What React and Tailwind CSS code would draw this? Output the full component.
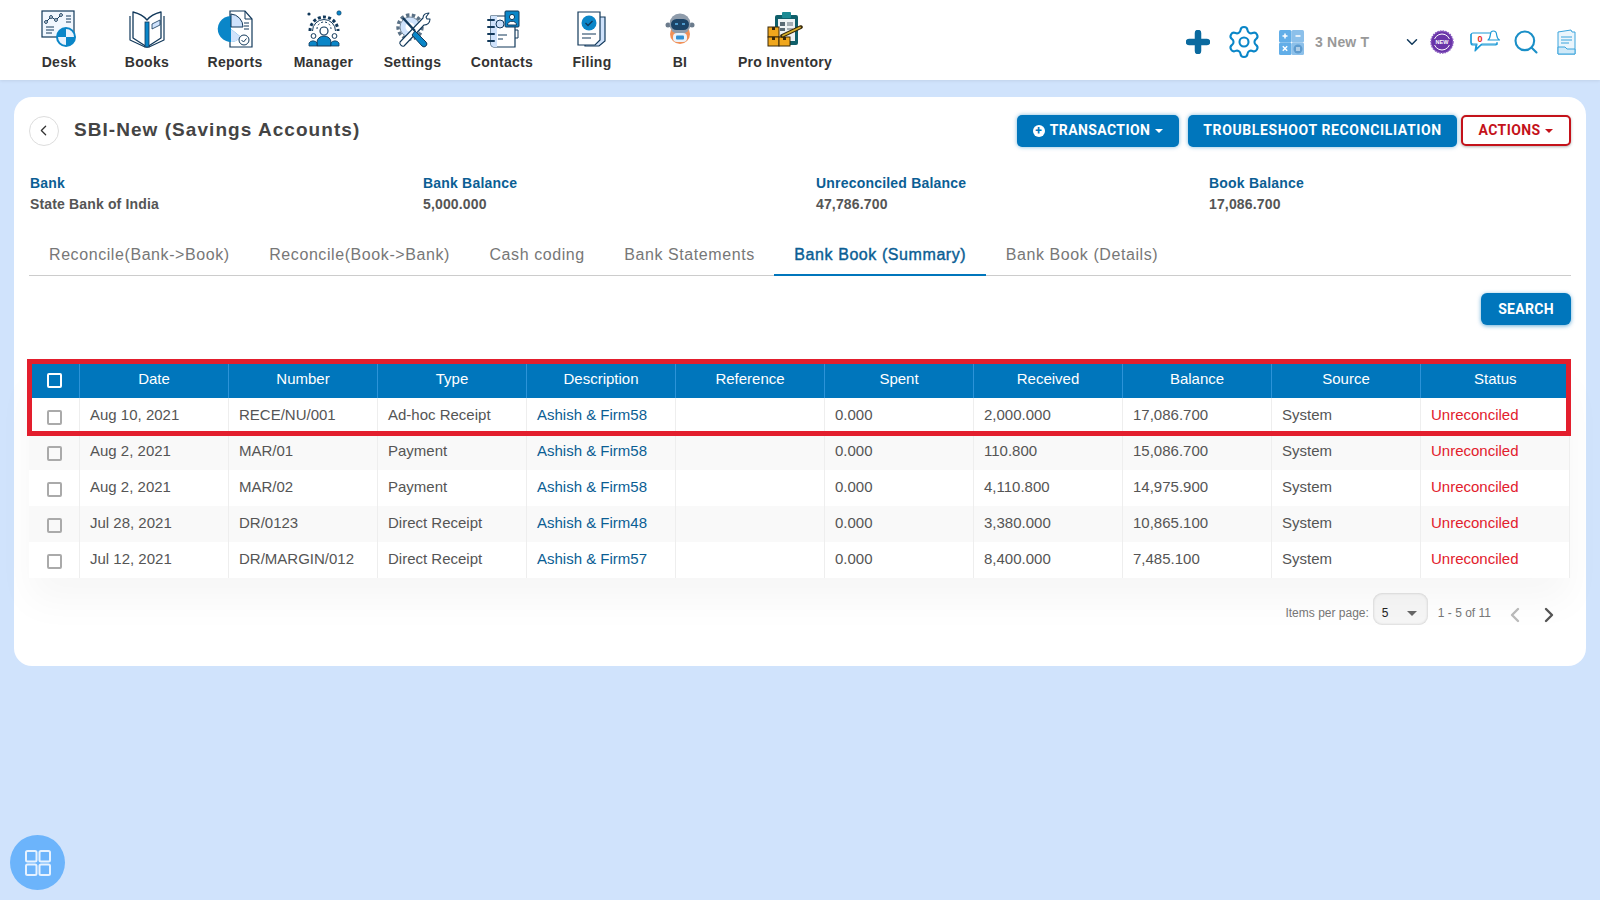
import React from 'react';
import { ChevronLeft, ChevronRight, ChevronDown, Settings, Search } from 'lucide-react';

const NAVY = '#12395b';
const BLUE = '#0a86c8';
const PALE = '#cfe2fb';

function DeskIcon() {
    return (
        <svg width="36" height="38" viewBox="0 0 36 38" fill="none">
            <rect x="1" y="1" width="32" height="26" fill="#f1f7fe" stroke={NAVY} strokeWidth="1.2" />
            <polyline points="5,12 10,7 15,10 20,5" stroke={NAVY} strokeWidth="1" />
            <circle cx="5" cy="12" r="1.4" fill="#fff" stroke={NAVY} />
            <circle cx="10" cy="7" r="1.4" fill="#fff" stroke={NAVY} />
            <circle cx="15" cy="10" r="1.4" fill="#fff" stroke={NAVY} />
            <circle cx="20" cy="5" r="1.4" fill="#fff" stroke={NAVY} />
            <path d="M25 6h5M25 9h5M25 12h5M5 17h8M5 20h8M5 23h6" stroke={NAVY} strokeWidth="1" />
            <circle cx="25" cy="27" r="10" fill={BLUE} />
            <path d="M25 19a8 8 0 0 1 8 8h-8zM25 27h-8a8 8 0 0 0 8 8z" fill="#e8f2fd" />
        </svg>
    );
}

function BooksIcon() {
    return (
        <svg width="36" height="38" viewBox="0 0 36 38" fill="none">
            <path d="M18 10C14 5 8 3 4 2v26l14 9 14-9V2c-4 1-10 3-14 8z" fill="#fff" stroke={NAVY} strokeWidth="1.3" strokeLinejoin="round" />
            <path d="M1 6v24l15 7h4l15-7V6" fill="none" stroke={NAVY} strokeWidth="1.2" strokeLinejoin="round" />
            <rect x="16" y="12" width="4" height="25" fill={BLUE} stroke={NAVY} strokeWidth="0.8" />
            <path d="M23 14l8-4v5l-8 4z" fill={PALE} stroke={NAVY} strokeWidth="0.8" />
        </svg>
    );
}

function ReportsIcon() {
    return (
        <svg width="36" height="38" viewBox="0 0 36 38" fill="none">
            <path d="M13 1h15l7 8v28H13z" fill="#fff" stroke={NAVY} strokeWidth="1.2" />
            <path d="M28 1v8h7" stroke={NAVY} strokeWidth="1" />
            <path d="M27 13h5M27 16h5M27 19h5" stroke={NAVY} strokeWidth="1" />
            <path d="M14 6a13 13 0 1 0 10 21l-10-8z" fill={BLUE} />
            <path d="M14 19l10 8a13 13 0 0 1-10 5z" fill={PALE} />
            <path d="M14 4a13 13 0 0 1 12 13H14z" fill={PALE} stroke={NAVY} strokeWidth="1" />
            <circle cx="27" cy="30" r="5" fill="#fff" stroke={NAVY} strokeWidth="1" />
            <path d="M24.5 30l2 2 3-3.5" stroke={NAVY} strokeWidth="1" />
        </svg>
    );
}

function ManagerIcon() {
    return (
        <svg width="36" height="38" viewBox="0 0 36 38" fill="none">
            <path d="M4 21a14 14 0 1 1 28 0" stroke={NAVY} strokeWidth="3" strokeDasharray="3 2.2" />
            <path d="M6.500 21a11.500 11.500 0 0 1 23 0" fill="#fff" stroke={NAVY} strokeWidth="1" />
            <path d="M11 19a7 7 0 0 1 14 0" stroke={NAVY} strokeWidth="1" strokeDasharray="2 2" />
            <circle cx="3" cy="4" r="1.6" fill={NAVY} />
            <circle cx="33" cy="3" r="2.2" fill={BLUE} stroke={NAVY} strokeWidth="0.6" />
            <circle cx="18" cy="21" r="4" fill="#fff" stroke={NAVY} strokeWidth="1.2" />
            <path d="M11 36v-4a7 6 0 0 1 14 0v4z" fill={BLUE} stroke={NAVY} strokeWidth="1" />
            <circle cx="7.5" cy="26" r="2.4" fill="#fff" stroke={NAVY} />
            <circle cx="28.5" cy="26" r="2.4" fill="#fff" stroke={NAVY} />
            <path d="M3 36v-3a4.500 4 0 0 1 8 0v3zM25 36v-3a4.500 4 0 0 1 8 0v3z" fill={BLUE} stroke={NAVY} strokeWidth="0.8" />
        </svg>
    );
}

function SettingsIcon() {
    return (
        <svg width="36" height="38" viewBox="0 0 36 38" fill="none">
            <circle cx="15" cy="17" r="12" fill="#fff" stroke="#5a7186" strokeWidth="3.400" strokeDasharray="3.400 2.400" />
            <circle cx="15" cy="17" r="10" fill={PALE} stroke="#5a7186" strokeWidth="0.8" />
            <circle cx="15" cy="17" r="4.500" fill="#fff" />
            <path d="M5 32L28 8c0-3 2-5 6-5l-3 4 1 2 3 0c0 4-3 6-6 6L9 36c-2 1-5-2-4-4z" fill="#fff" stroke={NAVY} strokeWidth="1.1" strokeLinejoin="round" />
            <path d="M8 8l12 13" stroke={NAVY} strokeWidth="2.4" />
            <path d="M20 21l11 11a2.800 2.800 0 0 1-4 4L17 25z" fill={BLUE} stroke={NAVY} strokeWidth="1" strokeLinejoin="round" />
        </svg>
    );
}

function ContactsIcon() {
    return (
        <svg width="36" height="38" viewBox="0 0 36 38" fill="none">
            <path d="M7 6h24v31H10a3 3 0 0 1-3-3z" fill="#fff" stroke={NAVY} strokeWidth="1.2" />
            <path d="M7 6h6v31h-3a3 3 0 0 1-3-3z" fill={PALE} />
            <circle cx="16" cy="14" r="4" fill={PALE} stroke={NAVY} />
            <rect x="21" y="1" width="14" height="16" rx="1" fill={BLUE} stroke={NAVY} strokeWidth="1" />
            <circle cx="28" cy="7" r="2.600" fill="#fff" stroke={NAVY} />
            <path d="M23.500 15c0-5 9-5 9 0z" fill="#fff" stroke={NAVY} />
            <path d="M4 10h6M4 17h6M4 24h6M4 31h6" stroke={NAVY} strokeWidth="2" strokeLinecap="round" />
            <path d="M14 25h9M14 29h5" stroke={NAVY} strokeWidth="1.1" />
            <path d="M31 20h3v8h-3" stroke={NAVY} strokeWidth="1" />
        </svg>
    );
}

function FilingIcon() {
    return (
        <svg width="30" height="36" viewBox="0 0 30 36" fill="none">
            <path d="M8 6h20v24l-6 5H8z" fill={PALE} stroke={NAVY} strokeWidth="1.2" />
            <path d="M1 1h22v28l-5 5H1z" fill="#fff" stroke={NAVY} strokeWidth="1.2" />
            <circle cx="12" cy="12" r="7.500" fill={BLUE} />
            <path d="M8.500 12l2.500 2.500 4.500-4.500" stroke="#12395b" strokeWidth="1.3" />
            <path d="M5 23h14M5 27h9" stroke={NAVY} strokeWidth="1.1" />
        </svg>
    );
}

function BiIcon() {
    return (
        <svg width="30" height="32" viewBox="0 0 30 32" fill="none">
            <circle cx="15" cy="21" r="10" fill="#ef7d3a" opacity="0.85" />
            <circle cx="3" cy="12" r="2.500" fill="#6b7b8c" />
            <circle cx="27" cy="12" r="2.500" fill="#6b7b8c" />
            <circle cx="15" cy="11" r="10.500" fill="#8f9cab" />
            <rect x="6" y="6" width="18" height="11" rx="5.500" fill="#1b4468" />
            <path d="M10 11h3M17 11h3" stroke="#5fb7ee" strokeWidth="1.4" />
            <rect x="8" y="20" width="14" height="9" rx="4" fill="#e9f2fb" />
            <rect x="11" y="22.500" width="8" height="4" rx="1" fill="#2f8fd3" />
        </svg>
    );
}

function InventoryIcon() {
    return (
        <svg width="36" height="36" viewBox="0 0 36 36" fill="none">
            <rect x="8" y="4" width="23" height="30" rx="2" fill="#0f5f6a" />
            <rect x="11" y="8" width="17" height="22" fill="#eef2f4" />
            <rect x="15" y="1" width="9" height="6" rx="1" fill="#1c8a94" />
            <path d="M13 11h5v4h-5zM13 17h5v3h-5z" fill="#5a6b75" />
            <path d="M20 12h6M20 14h6M20 18h6" stroke="#5a6b75" strokeWidth="1" />
            <rect x="1" y="16" width="11" height="10" fill="#f0a71d" stroke="#3a2a0a" strokeWidth="1" />
            <rect x="1" y="26" width="11" height="9" fill="#f0a71d" stroke="#3a2a0a" strokeWidth="1" />
            <rect x="12" y="26" width="11" height="9" fill="#f0a71d" stroke="#3a2a0a" strokeWidth="1" />
            <path d="M5 16h3v3H5zM5 26h3v3H5zM16 26h3v3h-3z" fill="#3a2a0a" />
            <path d="M15 25L34 16" stroke="#3a2a0a" strokeWidth="3.600" strokeLinecap="round" />
            <path d="M16 24.500L33 16.500" stroke="#d7b02a" strokeWidth="1.800" strokeLinecap="round" />
        </svg>
    );
}

function PlusIcon() {
    return (
        <svg width="24" height="24" viewBox="0 0 24 24" fill="none">
            <path d="M12 3v18M3 12h18" stroke="#0b6a9f" strokeWidth="6.500" strokeLinecap="round" />
        </svg>
    );
}

function CalcIcon() {
    return (
        <svg width="25" height="25" viewBox="0 0 25 25" fill="none">
            <rect x="0" y="0" width="12.500" height="12.500" rx="1.500" fill="#62aee8" />
            <rect x="12.500" y="0" width="12.500" height="12.500" rx="1.500" fill="#8cc0ea" />
            <rect x="0" y="12.500" width="12.500" height="12.500" rx="1.500" fill="#62aee8" />
            <rect x="12.500" y="12.500" width="12.500" height="12.500" rx="1.500" fill="#8cc0ea" />
            <path d="M3.500 6h5M6 3.500v5M16.500 6h5M3.800 16.300l4.400 4.400M8.200 16.300l-4.400 4.400" stroke="#fff" strokeWidth="1.500" />
            <circle cx="19" cy="19" r="4.500" fill="#5f9ccf" />
            <path d="M17 18h4M17 20h4" stroke="#fff" strokeWidth="1" />
        </svg>
    );
}

function NewBadge() {
    return (
        <svg width="24" height="24" viewBox="0 0 24 24">
            <circle cx="12" cy="12" r="11" fill="#6a35a8" stroke="#8a5cc0" strokeWidth="1.500" strokeDasharray="1.600 1" />
            <circle cx="12" cy="12" r="8" fill="none" stroke="#fff" strokeWidth="1" />
            <rect x="3" y="9" width="18" height="6" fill="#6a35a8" />
            <text x="12" y="14" textAnchor="middle" fill="#fff" fontSize="5.500" fontWeight="700" fontFamily="Liberation Sans, sans-serif">NEW</text>
        </svg>
    );
}

function ChatBell() {
    return (
        <svg width="31" height="26" viewBox="0 0 31 26" fill="none">
            <path d="M3 4h17M28 15H12l-6 5 1-5H3a2 2 0 0 1-2-2V6a2 2 0 0 1 2-2" stroke="#1d9ad6" strokeWidth="1.200" strokeLinejoin="round" />
            <path d="M1 5v9a2 2 0 0 0 2 2h3l-1 6 6-6h14a2 2 0 0 0 2-2v-1" stroke="#1d9ad6" strokeWidth="1.200" strokeLinejoin="round" />
            <path d="M18 11c2-1 2-3 2.500-6a3 3 0 0 1 6 0c.5 3 .5 5 3 6z" fill="#fff" stroke="#1d9ad6" strokeWidth="1.200" strokeLinejoin="round" />
            <text x="10" y="13" textAnchor="middle" fill="#e8291c" fontSize="9" fontWeight="700" fontFamily="Liberation Sans, sans-serif">0</text>
        </svg>
    );
}

function NotesIcon() {
    return (
        <svg width="19" height="26" viewBox="0 0 19 26" fill="none">
            <path d="M1 3l13-2 1 2h3v22H1z" fill="#eaf5fc" stroke="#3aa4dc" strokeWidth="1" />
            <path d="M4 8h11M4 11h11M4 14h8" stroke="#3aa4dc" strokeWidth="1" />
            <path d="M1 25v-7h7l2 2h8v5z" fill="#cfe9f8" stroke="#3aa4dc" strokeWidth="1" />
        </svg>
    );
}

const navItems = [
    { label: 'Desk', icon: <DeskIcon />, width: 'w-[88px]' },
    { label: 'Books', icon: <BooksIcon />, width: 'w-[88px]' },
    { label: 'Reports', icon: <ReportsIcon />, width: 'w-[88px]' },
    { label: 'Manager', icon: <ManagerIcon />, width: 'w-[89px]' },
    { label: 'Settings', icon: <SettingsIcon />, width: 'w-[89px]' },
    { label: 'Contacts', icon: <ContactsIcon />, width: 'w-[90px]' },
    { label: 'Filing', icon: <FilingIcon />, width: 'w-[90px]' },
    { label: 'BI', icon: <BiIcon />, width: 'w-[86px]' },
    { label: 'Pro Inventory', icon: <InventoryIcon />, width: 'w-[124px]' },
];

const summary = [
    { label: 'Bank', value: 'State Bank of India' },
    { label: 'Bank Balance', value: '5,000.000' },
    { label: 'Unreconciled Balance', value: '47,786.700' },
    { label: 'Book Balance', value: '17,086.700' },
];

const tabs = [
    'Reconcile(Bank->Book)',
    'Reconcile(Book->Bank)',
    'Cash coding',
    'Bank Statements',
    'Bank Book (Summary)',
    'Bank Book (Details)',
];

const columns = ['Date', 'Number', 'Type', 'Description', 'Reference', 'Spent', 'Received', 'Balance', 'Source', 'Status'];

const rows = [
    ['Aug 10, 2021', 'RECE/NU/001', 'Ad-hoc Receipt', 'Ashish & Firm58', '2,000.000', '17,086.700'],
    ['Aug 2, 2021', 'MAR/01', 'Payment', 'Ashish & Firm58', '110.800', '15,086.700'],
    ['Aug 2, 2021', 'MAR/02', 'Payment', 'Ashish & Firm58', '4,110.800', '14,975.900'],
    ['Jul 28, 2021', 'DR/0123', 'Direct Receipt', 'Ashish & Firm48', '3,380.000', '10,865.100'],
    ['Jul 12, 2021', 'DR/MARGIN/012', 'Direct Receipt', 'Ashish & Firm57', '8,400.000', '7,485.100'],
];

function Caret({ className }) {
    return <span className={`inline-block w-0 h-0 border-x-[4px] border-x-transparent border-t-[4px] ${className}`} />;
}

function App() {
    return (
        <div className="min-h-screen h-[900px] overflow-hidden bg-[#d0e3fc] font-['Liberation_Sans',sans-serif]">
            <header className="h-[80px] bg-white flex items-start pl-[15px] shadow-[0_1px_3px_rgba(0,0,0,0.08)]">
                {navItems.map((item) => (
                    <div key={item.label} className={`${item.width} h-[80px] flex flex-col items-center`}>
                        <div className="h-[38px] mt-[10px] flex items-center justify-center">{item.icon}</div>
                        <span className="mt-[6px] text-[14px] leading-[16px] font-bold tracking-[0.3px] text-[#333]">{item.label}</span>
                    </div>
                ))}
                <div className="ml-auto h-[80px] pt-[4px] flex items-center pr-[24px]">
                    <PlusIcon />
                    <Settings className="ml-[16px] text-[#0a86c8]" size={36} strokeWidth={1.4} />
                    <div className="ml-[17px]"><CalcIcon /></div>
                    <div className="ml-[11px] w-[88px] overflow-hidden text-[14px] font-bold text-[#999] tracking-[0.2px]">3 New T</div>
                    <ChevronDown className="text-[#12395b]" size={18} strokeWidth={2} />
                    <div className="ml-[9px]"><NewBadge /></div>
                    <div className="ml-[16px]"><ChatBell /></div>
                    <Search className="ml-[11px] text-[#1a8fc7]" size={28} strokeWidth={1.8} />
                    <div className="ml-[17px]"><NotesIcon /></div>
                </div>
            </header>

            <main className="mt-[17px] mx-[14px] h-[569px] bg-white rounded-[18px] pl-[15px] pr-[15px] pt-[18px]">
                <div className="h-[31px] flex items-center">
                    <button className="w-[30px] h-[30px] rounded-full border border-[#ddd] flex items-center justify-center text-[#333]">
                        <ChevronLeft className="mr-[1px]" size={17} strokeWidth={1.8} />
                    </button>
                    <h1 className="ml-[15px] text-[19px] font-bold tracking-[1.05px] text-[#444]">SBI-New (Savings Accounts)</h1>
                    <div className="ml-auto flex items-center font-['Roboto',sans-serif] text-[14px] font-bold tracking-[0.4px]">
                        <button className="h-[32px] w-[162px] rounded-[5px] bg-[#0076bc] text-white flex items-center justify-center gap-[5px] shadow-[0_0_4px_rgba(0,118,188,0.5)]">
                            <span className="w-[12px] h-[12px] rounded-full bg-white text-[#0076bc] flex items-center justify-center text-[12px] leading-none">+</span>
                            TRANSACTION
                            <Caret className="border-t-white" />
                        </button>
                        <button className="ml-[9px] h-[32px] w-[269px] rounded-[5px] bg-[#0076bc] text-white tracking-[0.63px] shadow-[0_0_4px_rgba(0,118,188,0.5)]">
                            TROUBLESHOOT RECONCILIATION
                        </button>
                        <button className="ml-[4px] h-[31px] w-[110px] rounded-[5px] border-2 border-[#c4121a] bg-white text-[#c4121a] flex items-center justify-center gap-[5px] shadow-[0_1px_3px_rgba(0,0,0,0.3)]">
                            ACTIONS
                            <Caret className="border-t-[#c4121a]" />
                        </button>
                    </div>
                </div>

                <div className="mt-[27px] pl-[1px] grid grid-cols-[393px_393px_393px_1fr] text-[14px] leading-[20px] font-bold">
                    {summary.map((item) => (
                        <div key={item.label}>
                            <div className="text-[#0b5e94] tracking-[0.2px]">{item.label}</div>
                            <div className="mt-[1px] text-[#555] tracking-[0.15px]">{item.value}</div>
                        </div>
                    ))}
                </div>

                <div className="mt-[18px] h-[44px] flex border-b border-[#ccc] text-[16px] tracking-[0.58px]">
                    {tabs.map((tab) => (
                        <div
                            key={tab}
                            className={
                                tab === 'Bank Book (Summary)'
                                    ? 'pl-[20px] pr-[19.5px] pt-[4px] h-[44px] flex items-center border-b-2 border-[#0076bc] text-[#0b5e94] [-webkit-text-stroke:0.4px_#0b5e94]'
                                    : 'pl-[20px] pr-[19.5px] pt-[2px] h-[44px] flex items-center text-[#777]'
                            }
                        >
                            {tab}
                        </div>
                    ))}
                </div>

                <div className="mt-[17px] flex justify-end">
                    <button className="w-[90px] h-[32px] rounded-[6px] bg-[#0076bc] text-white font-['Roboto',sans-serif] text-[14px] font-bold tracking-[0.3px] shadow-[0_1px_4px_rgba(0,118,188,0.6)]">
                        SEARCH
                    </button>
                </div>

                <div className="relative mt-[39px] w-[1540px]">
                    <table className="w-[1540px] table-fixed border-collapse text-[15px] shadow-[0_24px_36px_rgba(0,0,0,0.035)]">
                        <colgroup>
                            <col className="w-[50px]" />
                            {columns.map((c) => <col key={c} className="w-[149px]" />)}
                        </colgroup>
                        <thead>
                            <tr className="h-[34px] bg-[#0076bc] text-white">
                                <th className="p-0 pb-[2px]">
                                    <span className="block ml-[18px] w-[15px] h-[15px] border-2 border-white rounded-[2px]" />
                                </th>
                                {columns.map((c) => (
                                    <th key={c} className="p-0 pl-[1px] pb-[4px] font-normal border-l border-[#2c93d8]">{c}</th>
                                ))}
                            </tr>
                        </thead>
                        <tbody className="text-[#555]">
                            {rows.map((row, i) => (
                                <tr key={row[1]} className={i % 2 === 1 ? 'h-[36px] bg-[#f9f9f9]' : 'h-[36px] bg-white'}>
                                    <td className="p-0">
                                        <span className="block ml-[18px] mt-[2px] w-[15px] h-[15px] border-2 border-[#aaa] rounded-[2px]" />
                                    </td>
                                    <td className="pl-[10.5px] pb-[2px] border-l border-[#eee]">{row[0]}</td>
                                    <td className="pl-[10.5px] pb-[2px] border-l border-[#eee]">{row[1]}</td>
                                    <td className="pl-[10.5px] pb-[2px] border-l border-[#eee]">{row[2]}</td>
                                    <td className="pl-[10.5px] pb-[2px] border-l border-[#eee] text-[#0b5e94]">{row[3]}</td>
                                    <td className="pl-[10.5px] pb-[2px] border-l border-[#eee]" />
                                    <td className="pl-[10.5px] pb-[2px] border-l border-[#eee]">0.000</td>
                                    <td className="pl-[10.5px] pb-[2px] border-l border-[#eee]">{row[4]}</td>
                                    <td className="pl-[10.5px] pb-[2px] border-l border-[#eee]">{row[5]}</td>
                                    <td className="pl-[10.5px] pb-[2px] border-l border-[#eee]">System</td>
                                    <td className="pl-[10.5px] pb-[2px] border-x border-[#eee] text-[#e2202c]">Unreconciled</td>
                                </tr>
                            ))}
                        </tbody>
                    </table>
                    <div className="absolute left-[-2px] top-[-5px] w-[1544px] h-[77px] border-[5px] border-[#e31e2d] pointer-events-none" />
                </div>

                <div className="mt-[15px] w-[1540px] h-[32px] flex items-center text-[12px] text-[#777]">
                    <span className="ml-auto pt-[8px]">Items per page:</span>
                    <div className="ml-[4px] w-[55px] h-[32px] pt-[8px] rounded-[9px] bg-[#f6f6f6] shadow-[inset_0_0_3px_rgba(0,0,0,0.2)] flex items-center justify-between pl-[9px] pr-[11px] text-[#222]">
                        5
                        <span className="inline-block w-0 h-0 border-x-[5px] border-x-transparent border-t-[5px] border-t-[#666]" />
                    </div>
                    <span className="ml-[10px] pt-[8px]">1 - 5 of 11</span>
                    <ChevronLeft className="ml-[12px] mt-[12px] text-[#bbb]" size={24} strokeWidth={2.4} />
                    <ChevronRight className="ml-[10px] mr-[8px] mt-[12px] text-[#555]" size={24} strokeWidth={2.4} />
                </div>
            </main>

            <button className="fixed left-[10px] top-[835px] w-[55px] h-[55px] rounded-full bg-[#6cb4fb] flex items-center justify-center">
                <svg width="26" height="26" viewBox="0 0 26 26" fill="none" stroke="#e6f2ff" strokeWidth="2">
                    <rect x="1" y="1" width="10.500" height="10.500" rx="1.500" />
                    <rect x="14.500" y="1" width="10.500" height="10.500" rx="1.500" />
                    <rect x="1" y="14.500" width="10.500" height="10.500" rx="1.500" />
                    <rect x="14.500" y="14.500" width="10.500" height="10.500" rx="1.500" />
                </svg>
            </button>
        </div>
    );
}

export default App;
